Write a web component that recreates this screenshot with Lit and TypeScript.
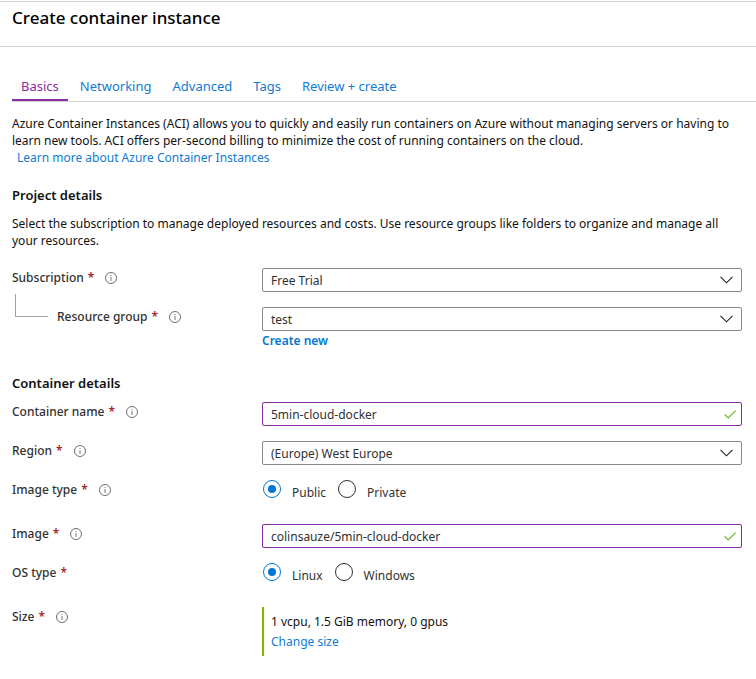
import { LitElement, html, css, nothing } from "lit";
import { customElement } from "lit/decorators.js";

const infoIcon = html`<svg class="info" viewBox="0 0 12 12" aria-hidden="true">
  <circle cx="6" cy="6" r="5.5" fill="none" stroke="#605e5c" stroke-width="0.9" />
  <path d="M6 5v4M6 3v1" stroke="#797775" stroke-width="1" fill="none" />
</svg>`;

const caption = (text: string, target: string, info = true) => html`
  <div class="caption">
    <label class="name" for=${target}>${text}<span class="star">*</span></label>
    ${info ? infoIcon : nothing}
  </div>
`;

@customElement("app-root")
export class AppRoot extends LitElement {
  static styles = css`
    :host {
      display: block;
      font: 12px/17px "Noto Sans", "Liberation Sans", sans-serif;
      color: #111;
      background: #fff;
    }
    * { box-sizing: border-box; }
    a { color: #0f7bd4; text-decoration: none; }
    header {
      margin-top: 1px;
      padding: 4px 12px 16px;
      border-top: 1px solid #d2d2d2;
      border-bottom: 1px solid #d2d2d2;
    }
    h1 { margin: 0; font-size: 17px; line-height: 24px; font-weight: 500; color: #000; }
    h2 { margin: 0; font-size: 13px; line-height: 18px; font-weight: 600; color: #111; }
    main { padding: 24px 14px 24px 12px; }
    p { margin: 0; }
    .tabs {
      display: flex;
      gap: 3px;
      margin-right: -14px;
      border-bottom: 1px solid #d2d2d2;
      font-size: 13px;
      line-height: 18px;
    }
    .tab { padding: 6px 9px 4px; border-bottom: 2px solid transparent; white-space: nowrap; }
    .tab.active { color: #8a2da5; border-color: #8a2da5; }
    .intro { margin-top: 13px; }
    .learn { margin-left: 5px; }
    .project { margin-top: 20px; }
    .about { margin-top: 11px; }
    .form { display: grid; gap: 15px; margin-top: 19px; }
    .row { display: grid; grid-template-columns: 250px minmax(0, 1fr); align-items: start; }
    .caption { display: flex; align-items: center; gap: 11px; line-height: 20px; color: #323130; font-weight: 500; }
    .name { display: flex; gap: 4px; }
    .star { color: #a4262c; font-weight: 600; }
    .info { width: 12px; height: 12px; }
    .nested { display: flex; gap: 9px; padding-left: 3px; }
    .elbow {
      width: 33px;
      height: 23px;
      margin-top: -13px;
      border-left: 1px solid #a19f9d;
      border-bottom: 1px solid #a19f9d;
    }
    .box { display: grid; align-items: center; }
    .box > * { grid-area: 1 / 1; }
    .control {
      appearance: none;
      width: 100%;
      height: 24px;
      margin: 0;
      padding: 0 32px 0 8px;
      border: 1px solid #8a8886;
      border-radius: 2px;
      background: #fff;
      color: #323130;
      font: inherit;
      outline: none;
    }
    .valid { border-color: #8a2da5; }
    .mark { justify-self: end; margin-right: 9px; pointer-events: none; fill: none; }
    .check { margin-right: 6px; }
    .create { display: block; margin-top: 1px; font-weight: 600; color: #0078d4; }
    .container { margin-top: 25px; }
    .container + .form { margin-top: 10px; }
    .radios { display: flex; gap: 12px; padding: 0 0 5px 1px; color: #323130; }
    .choice { display: flex; gap: 11px; height: 24px; align-items: flex-start; }
    .choice span { padding-top: 4px; }
    .radio {
      appearance: none;
      width: 18px;
      height: 18px;
      margin: 0;
      padding: 4px;
      border: 1px solid #323130;
      border-radius: 50%;
    }
    .radio:checked {
      border-color: #0078d4;
      background: #0078d4 content-box;
    }
    .size { border-left: 2px solid #7fba00; padding: 5px 0 4px 7px; line-height: 20px; }
  `;

  private select(id: string, value: string) {
    return html`<div class="box">
      <select class="control" id=${id}><option>${value}</option></select>
      <svg class="mark" width="13" height="8" aria-hidden="true">
        <path d="M.5 .8L6.5 6.8L12.5 .8" stroke="#222" stroke-width="1.1" />
      </svg>
    </div>`;
  }

  private input(id: string, value: string) {
    return html`<div class="box">
      <input class="control valid" id=${id} .value=${value} />
      <svg class="mark check" width="12" height="9" aria-hidden="true">
        <path d="M.5 4.4L4.2 8L11.6 .6" stroke="#6bb324" stroke-width="1.2" />
      </svg>
    </div>`;
  }

  private radios(name: string, options: string[]) {
    return html`<div class="radios" role="radiogroup">
      ${options.map((o, i) => html`<label class="choice">
        <input class="radio" type="radio" id=${`${name}-${i}`} name=${name} ?checked=${i === 0} />
        <span>${o}</span>
      </label>`)}
    </div>`;
  }

  render() {
    const tabs = ["Basics", "Networking", "Advanced", "Tags", "Review + create"];
    return html`
      <header><h1>Create container instance</h1></header>
      <main>
        <nav class="tabs">
          ${tabs.map((t, i) => html`<a href="#" class=${i === 0 ? "tab active" : "tab"}>${t}</a>`)}
        </nav>
        <p class="intro">
          Azure Container Instances (ACI) allows you to quickly and easily run containers on Azure without managing servers or having to learn new tools. ACI offers per-second billing to minimize the cost of running containers on the cloud.
        </p>
        <a class="learn" href="#">Learn more about Azure Container Instances</a>
        <h2 class="project">Project details</h2>
        <p class="about">
          Select the subscription to manage deployed resources and costs. Use resource groups like folders to organize and manage all your resources.
        </p>
        <div class="form">
          <div class="row">${caption("Subscription", "subscription")}${this.select("subscription", "Free Trial")}</div>
          <div class="row">
            <div class="nested"><span class="elbow"></span>${caption("Resource group", "group")}</div>
            <div>${this.select("group", "test")}<a class="create" href="#">Create new</a></div>
          </div>
        </div>
        <h2 class="container">Container details</h2>
        <div class="form">
          <div class="row">${caption("Container name", "name")}${this.input("name", "5min-cloud-docker")}</div>
          <div class="row">${caption("Region", "region")}${this.select("region", "(Europe) West Europe")}</div>
          <div class="row">${caption("Image type", "visibility-0")}${this.radios("visibility", ["Public", "Private"])}</div>
          <div class="row">${caption("Image", "image")}${this.input("image", "colinsauze/5min-cloud-docker")}</div>
          <div class="row">${caption("OS type", "os-0", false)}${this.radios("os", ["Linux", "Windows"])}</div>
          <div class="row">
            ${caption("Size", "size")}
            <div class="size"><output id="size">1 vcpu, 1.5 GiB memory, 0 gpus</output><br /><a href="#">Change size</a></div>
          </div>
        </div>
      </main>
    `;
  }
}
